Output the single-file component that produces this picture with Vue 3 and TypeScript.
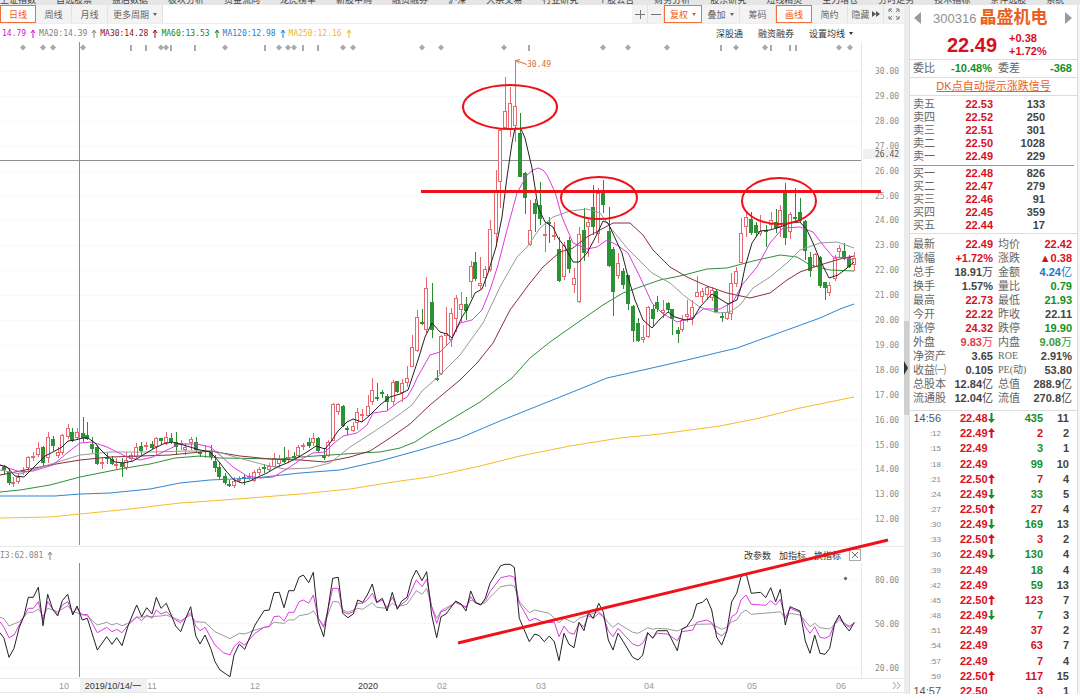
<script setup lang="ts">
type Candle = [x: number, high: number, top: number, bottom: number, low: number, up: 0 | 1]
type Tone = 'up' | 'down' | 'flat' | 'blue' | 'warm' | 'cool'

const marketTabs = ['上证指数', '自选股票', '盘后数据', '板块分析', '资金流向', '龙虎榜单', '新股申购', '融资融券', '沪深', '大宗交易', '行业研究', '个股公告', '财务分析', '股东研究', '短线精灵', '主力增仓', '分时走势', '技术指标', '条件选股', '系统']

const mas = [
  { text: '14.79', color: '#d414d4' },
  { text: 'MA20:14.39', color: '#808080' },
  { text: 'MA30:14.28', color: '#8a0f1c' },
  { text: 'MA60:13.53', color: '#128a12' },
  { text: 'MA120:12.98', color: '#1b7fd6' },
  { text: 'MA250:12.16', color: '#f5b521' },
]

const prices = Array.from({ length: 19 }, (_, i) => 30 - i)
const priceY = (p: number) => Math.round(71 + (30 - p) * 24.9)

const diamonds = [23, 43, 53, 83, 161, 166, 225, 279, 288, 294, 343, 353, 422, 441, 504, 603, 628, 667, 736, 765, 839, 850]
const bars = [131, 146, 171, 195, 265, 303, 318, 529, 721, 771, 790, 796]

const candles: Candle[] = [
  [4, 465, 467, 470, 475, 0], [9, 468, 472, 483, 485, 0], [13, 477, 482, 483, 487, 1], [18, 473, 477, 482, 484, 1],
  [23, 467, 470, 472, 475, 1], [28, 456, 457, 468, 471, 1], [33, 452, 456, 457, 461, 1], [38, 442, 448, 455, 457, 1],
  [43, 446, 447, 463, 467, 0], [48, 432, 437, 458, 463, 1], [53, 436, 439, 446, 451, 0], [58, 447, 452, 456, 458, 1],
  [62, 434, 435, 453, 455, 1], [68, 424, 428, 437, 439, 1], [72, 428, 432, 441, 442, 0], [77, 428, 432, 438, 440, 1],
  [83, 417, 433, 438, 442, 0], [87, 422, 435, 439, 440, 0], [92, 437, 444, 449, 453, 0], [97, 445, 447, 464, 465, 0],
  [102, 457, 462, 463, 469, 1], [107, 453, 457, 458, 464, 0], [112, 456, 459, 464, 465, 0], [116, 458, 464, 466, 469, 1],
  [122, 458, 463, 467, 477, 0], [126, 452, 460, 468, 470, 1], [131, 453, 455, 459, 461, 1], [136, 443, 447, 457, 458, 1],
  [141, 442, 446, 451, 455, 0], [146, 442, 445, 446, 450, 1], [152, 441, 444, 448, 449, 0], [156, 437, 438, 447, 455, 1],
  [161, 438, 438, 441, 445, 0], [166, 432, 437, 443, 445, 1], [171, 433, 438, 442, 444, 0], [176, 432, 442, 447, 455, 0],
  [181, 440, 443, 444, 450, 1], [185, 443, 447, 450, 455, 1], [191, 437, 439, 443, 450, 1], [196, 437, 442, 450, 452, 0],
  [200, 451, 452, 454, 457, 0], [205, 445, 450, 452, 458, 1], [211, 445, 451, 457, 460, 0], [215, 455, 461, 468, 472, 0],
  [219, 463, 467, 477, 480, 0], [225, 473, 476, 483, 485, 0], [229, 480, 484, 486, 487, 0], [234, 477, 481, 486, 488, 1],
  [239, 476, 479, 481, 483, 1], [244, 475, 477, 479, 485, 0], [249, 473, 476, 478, 480, 1], [254, 470, 472, 481, 482, 1],
  [259, 467, 469, 473, 475, 1], [264, 464, 467, 468, 473, 0], [269, 463, 466, 470, 471, 1], [274, 453, 458, 467, 467, 1],
  [279, 455, 459, 464, 467, 1], [284, 447, 459, 462, 463, 0], [288, 450, 457, 460, 463, 1], [294, 452, 456, 457, 459, 0],
  [298, 445, 447, 456, 457, 1], [303, 443, 445, 447, 450, 1], [309, 438, 442, 446, 448, 0], [313, 433, 438, 443, 446, 1],
  [318, 437, 438, 451, 452, 0], [324, 448, 456, 457, 460, 0], [328, 440, 442, 456, 457, 1], [333, 403, 404, 441, 441, 1],
  [338, 403, 404, 412, 415, 1], [343, 405, 406, 426, 427, 0], [347, 426, 428, 429, 435, 0], [353, 422, 426, 431, 432, 1],
  [357, 408, 412, 423, 430, 1], [362, 409, 414, 415, 422, 1], [368, 395, 406, 416, 417, 1], [372, 378, 390, 402, 405, 1],
  [377, 383, 397, 399, 401, 0], [382, 390, 392, 394, 398, 0], [387, 394, 396, 402, 410, 0], [393, 380, 382, 402, 405, 1],
  [397, 381, 381, 392, 393, 0], [402, 379, 383, 393, 402, 1], [407, 366, 378, 383, 387, 1], [412, 335, 347, 367, 367, 1],
  [417, 310, 317, 351, 352, 1], [422, 309, 322, 323, 325, 0], [426, 277, 288, 330, 333, 1], [432, 283, 302, 330, 338, 0],
  [437, 370, 378, 380, 381, 0], [441, 335, 336, 374, 375, 1], [446, 307, 333, 336, 345, 1], [451, 308, 313, 340, 347, 1],
  [456, 295, 298, 319, 332, 1], [461, 292, 304, 310, 323, 1], [466, 297, 304, 311, 320, 0], [471, 261, 266, 282, 298, 1],
  [475, 252, 262, 279, 281, 0], [480, 257, 283, 286, 289, 1], [485, 266, 269, 278, 287, 1], [490, 220, 229, 270, 272, 1],
  [496, 170, 192, 234, 247, 1], [500, 129, 130, 182, 208, 1], [505, 77, 111, 128, 129, 1], [510, 87, 103, 130, 137, 1],
  [515, 60, 106, 126, 142, 1], [520, 113, 133, 177, 177, 0], [525, 172, 173, 198, 214, 0], [530, 200, 230, 245, 246, 1],
  [535, 199, 203, 214, 232, 0], [540, 182, 205, 219, 225, 0], [545, 222, 234, 235, 252, 1], [549, 217, 222, 223, 243, 0],
  [554, 222, 235, 237, 240, 1], [559, 237, 249, 281, 282, 0], [564, 242, 245, 277, 280, 1], [569, 237, 240, 269, 273, 0],
  [574, 268, 278, 285, 293, 1], [579, 227, 234, 302, 303, 1], [584, 208, 230, 253, 261, 0], [588, 218, 222, 227, 257, 1],
  [593, 185, 207, 227, 235, 0], [598, 188, 193, 234, 243, 1], [603, 180, 192, 205, 213, 0], [609, 207, 231, 266, 267, 0],
  [613, 247, 249, 292, 316, 0], [618, 253, 263, 276, 279, 1], [623, 268, 271, 285, 289, 0], [628, 275, 275, 304, 310, 0],
  [633, 305, 306, 331, 342, 0], [638, 318, 323, 341, 342, 0], [643, 325, 337, 340, 343, 1], [648, 306, 307, 337, 338, 1],
  [653, 305, 309, 319, 327, 0], [657, 296, 302, 309, 312, 0], [663, 300, 310, 313, 318, 1], [668, 302, 303, 310, 312, 0],
  [672, 309, 309, 319, 335, 0], [678, 327, 330, 334, 343, 0], [682, 315, 320, 330, 332, 1], [687, 300, 314, 317, 322, 1],
  [692, 300, 307, 318, 325, 1], [697, 276, 292, 297, 297, 1], [702, 288, 291, 297, 303, 1], [707, 286, 287, 295, 300, 1],
  [712, 287, 290, 298, 301, 1], [716, 290, 291, 312, 312, 0], [722, 313, 316, 317, 322, 0], [727, 303, 312, 319, 320, 1],
  [731, 273, 283, 314, 320, 1], [736, 267, 271, 284, 287, 1], [741, 218, 233, 263, 263, 1], [746, 213, 217, 227, 237, 1],
  [751, 212, 219, 233, 235, 0], [756, 222, 225, 233, 237, 0], [760, 215, 231, 234, 236, 1], [766, 225, 230, 232, 247, 0],
  [771, 212, 220, 225, 229, 1], [776, 209, 222, 228, 233, 0], [780, 205, 210, 227, 237, 1], [785, 183, 192, 238, 245, 0],
  [790, 212, 214, 232, 239, 1], [795, 188, 217, 219, 222, 0], [800, 198, 212, 221, 223, 0], [805, 220, 221, 251, 260, 0],
  [810, 252, 257, 271, 277, 0], [815, 253, 254, 267, 267, 1], [820, 256, 257, 286, 288, 0], [825, 282, 282, 288, 300, 0],
  [829, 282, 285, 293, 296, 1], [835, 255, 258, 279, 281, 1], [839, 245, 248, 252, 257, 1], [844, 243, 251, 259, 260, 0],
  [849, 255, 257, 267, 268, 0], [854, 252, 258, 265, 271, 1],
]

const averages = [
  { name: 'ma250', points: '0,518 50,517 80,514 130,509 180,503 210,501 250,498 300,494 350,489 400,481 430,477 480,466 520,456 570,446 620,438 660,434 720,426 760,418 800,408 854,397' },
  { name: 'ma120', points: '0,496 55,496 80,494 110,493 150,489 180,483 210,480 255,478 300,473 340,470 380,461 420,450 460,438 500,421 540,405 570,393 607,378 643,370 687,360 737,348 787,330 820,318 840,309 854,304' },
  { name: 'ma60', points: '0,492 20,490 50,485 80,477 120,469 150,464 175,458 200,456 220,458 280,459 300,457 330,455 360,453 380,452 400,448 415,442 430,432 450,420 480,402 512,378 530,358 550,342 577,323 603,305 623,293 640,287 660,280 680,276 707,269 727,268 753,261 780,255 797,257 810,265 830,270 854,271' },
  { name: 'ma30', points: '0,475 20,471 50,465 80,460 110,457 140,456 170,455 210,451 240,456 270,459 300,460 325,462 350,457 370,451 390,438 410,424 430,405 460,380 477,363 493,343 510,310 530,283 543,267 560,252 573,248 587,237 600,230 613,223 630,223 643,235 653,250 670,267 687,277 707,286 727,293 750,298 770,293 787,280 800,272 820,265 840,259 854,256' },
  { name: 'ma20', points: '0,470 20,474 45,466 80,455 110,452 150,452 190,451 215,451 235,457 265,465 285,469 310,468 330,463 350,447 375,431 400,414 412,405 422,391 430,384 442,373 460,355 483,323 500,287 517,257 527,247 540,228 553,217 570,211 587,209 600,213 610,227 627,248 652,273 670,283 687,298 700,307 717,313 730,312 740,305 753,288 770,277 787,263 800,250 820,243 837,242 854,248' },
  { name: 'ma10', points: '0,465 20,472 33,471 53,465 67,453 80,443 92,442 107,447 127,457 140,460 153,457 167,450 180,444 197,444 210,447 220,455 233,467 247,476 260,478 273,477 287,469 300,460 313,453 325,452 333,444 343,436 357,433 367,425 373,413 387,411 397,403 407,397 413,387 417,378 430,355 440,352 450,342 460,323 472,320 482,310 490,290 498,265 507,230 517,193 527,175 533,170 538,168 543,170 547,175 555,192 562,217 573,243 587,249 597,247 607,240 617,245 628,253 640,277 652,303 662,313 677,322 692,318 703,309 720,309 733,302 742,285 757,267 770,243 783,228 800,227 813,232 823,245 833,257 847,258 854,260' },
  { name: 'ma5', points: '0,465 7,467 15,476 24,477 30,471 37,464 45,456 53,452 62,447 68,441 75,440 83,438 88,438 95,443 100,449 107,456 115,462 123,463 133,461 143,455 153,449 163,444 172,442 180,444 190,447 200,450 210,452 215,457 220,463 226,471 234,480 242,483 250,481 258,477 267,473 277,467 287,463 297,458 307,452 316,446 325,449 330,443 338,431 347,422 353,419 362,422 370,415 380,405 390,397 400,394 408,390 412,378 418,360 425,337 432,323 440,332 447,334 452,338 462,317 468,308 475,293 482,289 488,273 496,247 502,217 507,177 512,143 515,128 521,129 525,138 532,168 538,207 545,222 553,227 558,238 565,247 573,262 579,262 587,253 594,240 598,232 603,221 608,223 615,238 622,253 628,277 635,300 643,320 652,328 660,319 668,312 675,317 685,320 693,319 700,307 712,294 720,299 728,304 737,300 741,287 745,267 752,243 760,231 770,230 780,227 790,223 800,222 807,230 813,243 820,260 829,278 838,275 847,268 854,262' },
]

// Oscillator samples are kept in thirds of a chart unit, one block per stretch of the time axis.
type Block = { x: number; y: number; data: number[] }
const toPoints = (blocks: Block[]) =>
  blocks
    .flatMap((b) => {
      const out: string[] = []
      for (let i = 0; i < b.data.length; i += 2) {
        out.push(`${(b.x + b.data[i] / 3).toFixed(1)},${(b.y + b.data[i + 1] / 3).toFixed(1)}`)
      }
      return out
    })
    .join(' ')

const oscillators = [
  {
    name: 'rsi24',
    points: toPoints([
      { x: 0, y: 540, data: [0, 232, 12, 236, 27, 258, 58, 245, 85, 217, 100, 217, 115, 207, 129, 228, 143, 205, 173, 215, 203, 197, 218, 215, 247, 223, 262, 228, 292, 255, 320, 247, 336, 255, 350, 250, 366, 257, 385, 250, 410, 232, 440, 230, 483, 228, 499, 225, 542, 242, 572, 225, 587, 245, 615, 247, 645, 275, 690, 296, 718, 280, 734, 282, 765, 270, 808, 258, 822, 247, 852, 250, 866, 240, 882, 240, 897, 227, 926, 222, 940, 213, 955, 235, 971, 257, 998, 185, 1015, 185, 1028, 210, 1044, 217, 1073, 205] },
      { x: 360, y: 540, data: [8, 208, 37, 188, 50, 202, 81, 205, 97, 190, 112, 200, 141, 193, 169, 152, 186, 163, 200, 145, 215, 200, 230, 235, 243, 212, 287, 188, 318, 200, 332, 180, 362, 193, 376, 188, 390, 172, 422, 140, 450, 135, 463, 138, 478, 185, 508, 218, 524, 210, 568, 220, 597, 248, 612, 235, 642, 248, 657, 235, 685, 225, 716, 215, 730, 228, 745, 248, 759, 262, 774, 250, 818, 277, 834, 280] },
      { x: 640, y: 530, data: [0, 307, 23, 293, 38, 298, 52, 295, 82, 297, 112, 303, 140, 290, 170, 283, 215, 282, 245, 298, 260, 292, 275, 275, 290, 270, 303, 250, 318, 240, 334, 253, 392, 248, 421, 245, 436, 265, 450, 250, 480, 255, 510, 290, 524, 280, 540, 293, 569, 297, 584, 283, 598, 270, 628, 288, 643, 280] },
    ]),
  },
  {
    name: 'rsi12',
    points: toPoints([
      { x: 0, y: 540, data: [0, 245, 12, 262, 27, 293, 42, 285, 58, 255, 85, 205, 100, 205, 115, 185, 129, 240, 143, 185, 158, 208, 173, 222, 187, 195, 203, 185, 218, 220, 231, 205, 247, 225, 262, 223, 292, 278, 320, 262, 336, 275, 350, 268, 366, 278, 385, 255, 410, 230, 425, 242, 440, 225, 456, 235, 469, 210, 483, 222, 499, 215, 527, 240, 542, 248, 557, 232, 572, 218, 587, 258, 600, 272, 615, 262, 645, 315, 670, 338, 690, 345, 702, 320, 718, 305, 734, 315, 765, 280, 792, 262, 808, 260, 822, 230, 838, 228, 852, 243, 866, 217, 882, 217, 897, 185, 910, 180, 926, 190, 940, 165, 955, 235, 971, 262, 985, 205, 998, 145, 1015, 145, 1028, 215, 1044, 222, 1060, 215, 1073, 190] },
      { x: 360, y: 540, data: [8, 190, 22, 180, 37, 160, 50, 188, 67, 180, 81, 203, 97, 172, 112, 203, 141, 180, 169, 120, 186, 140, 200, 118, 215, 200, 230, 250, 243, 215, 258, 210, 287, 185, 318, 203, 332, 170, 347, 190, 362, 193, 376, 182, 390, 155, 422, 113, 450, 107, 463, 112, 478, 190, 493, 215, 508, 243, 524, 235, 553, 248, 583, 247, 597, 290, 612, 258, 627, 278, 642, 283, 657, 250, 672, 260, 685, 227, 700, 235, 716, 220, 730, 230, 745, 272, 759, 290, 774, 265, 818, 312, 834, 318] },
      { x: 640, y: 530, data: [0, 345, 10, 338, 23, 308, 38, 323, 52, 310, 82, 312, 112, 332, 126, 305, 158, 300, 170, 277, 200, 270, 215, 278, 230, 308, 245, 318, 260, 303, 275, 260, 290, 250, 303, 210, 318, 195, 334, 223, 377, 226, 392, 212, 407, 225, 421, 208, 436, 265, 450, 235, 480, 247, 496, 290, 510, 310, 524, 290, 540, 322, 555, 325, 569, 318, 584, 280, 598, 262, 613, 283, 628, 292, 643, 278] },
    ]),
  },
  {
    name: 'rsi6',
    points: toPoints([
      { x: 0, y: 540, data: [0, 278, 12, 295, 27, 352, 42, 325, 58, 262, 72, 228, 85, 172, 100, 172, 115, 142, 129, 257, 143, 163, 158, 208, 173, 228, 187, 182, 203, 163, 218, 225, 231, 198, 247, 240, 262, 235, 292, 330, 320, 290, 336, 313, 350, 293, 366, 317, 385, 255, 410, 195, 425, 230, 440, 203, 456, 222, 469, 172, 483, 205, 499, 190, 527, 258, 542, 275, 557, 235, 572, 200, 587, 287, 600, 312, 615, 285, 632, 325, 645, 365, 660, 390, 690, 410, 702, 345, 718, 312, 734, 328, 750, 290, 765, 255, 792, 212, 808, 210, 822, 158, 838, 157, 852, 203, 866, 152, 882, 152, 897, 112, 910, 105, 926, 128, 940, 97, 955, 245, 971, 290, 985, 200, 998, 115, 1015, 112, 1028, 220, 1044, 233, 1060, 222, 1073, 180] },
      { x: 360, y: 540, data: [8, 187, 22, 165, 37, 132, 50, 187, 67, 175, 81, 213, 97, 157, 112, 208, 125, 183, 141, 172, 155, 118, 169, 90, 186, 122, 200, 95, 215, 225, 230, 293, 243, 230, 258, 222, 287, 183, 303, 192, 318, 213, 332, 153, 347, 188, 362, 195, 376, 175, 390, 130, 422, 77, 435, 73, 450, 73, 463, 82, 478, 235, 493, 270, 508, 305, 524, 282, 538, 287, 553, 305, 568, 288, 583, 305, 597, 362, 612, 280, 627, 313, 642, 323, 657, 247, 672, 272, 685, 218, 700, 235, 716, 190, 730, 215, 745, 300, 759, 330, 774, 280, 790, 305, 818, 352, 834, 360] },
      { x: 640, y: 530, data: [8, 375, 23, 308, 38, 325, 52, 302, 82, 302, 112, 362, 126, 297, 140, 290, 158, 263, 170, 222, 187, 217, 200, 205, 215, 240, 230, 322, 245, 345, 260, 305, 275, 215, 290, 190, 303, 140, 318, 130, 334, 190, 362, 187, 377, 203, 392, 173, 407, 215, 421, 178, 436, 285, 450, 230, 480, 243, 496, 333, 510, 370, 524, 315, 540, 370, 555, 373, 569, 355, 584, 280, 598, 255, 613, 285, 628, 303, 643, 277] },
    ]),
  },
]

const months = [
  { x: 64, t: '10' }, { x: 152, t: '11' }, { x: 255, t: '12' }, { x: 442, t: '02' },
  { x: 541, t: '03' }, { x: 649, t: '04' }, { x: 752, t: '05' }, { x: 841, t: '06' },
]

const asks = [['卖五', '22.53', '133'], ['卖四', '22.52', '250'], ['卖三', '22.51', '301'], ['卖二', '22.50', '1028'], ['卖一', '22.49', '229']]
const bids = [['买一', '22.48', '826'], ['买二', '22.47', '279'], ['买三', '22.46', '91'], ['买四', '22.45', '359'], ['买五', '22.44', '17']]

type Cell = { k: string; v: string; u?: string; c: Tone }
const stats: [Cell, Cell][] = [
  [{ k: '最新', v: '22.49', c: 'up' }, { k: '均价', v: '22.42', c: 'up' }],
  [{ k: '涨幅', v: '+1.72%', c: 'up' }, { k: '涨跌', v: '▲0.38', c: 'up' }],
  [{ k: '总手', v: '18.91', u: '万', c: 'flat' }, { k: '金额', v: '4.24', u: '亿', c: 'blue' }],
  [{ k: '换手', v: '1.57%', c: 'flat' }, { k: '量比', v: '0.79', c: 'down' }],
  [{ k: '最高', v: '22.73', c: 'up' }, { k: '最低', v: '21.93', c: 'down' }],
  [{ k: '今开', v: '22.22', c: 'up' }, { k: '昨收', v: '22.11', c: 'flat' }],
  [{ k: '涨停', v: '24.32', c: 'up' }, { k: '跌停', v: '19.90', c: 'down' }],
  [{ k: '外盘', v: '9.83', u: '万', c: 'warm' }, { k: '内盘', v: '9.08', u: '万', c: 'cool' }],
  [{ k: '净资产', v: '3.65', c: 'flat' }, { k: 'ROE', v: '2.91%', c: 'flat' }],
  [{ k: '收益㈠', v: '0.105', c: 'flat' }, { k: 'PE(动)', v: '53.80', c: 'flat' }],
  [{ k: '总股本', v: '12.84', u: '亿', c: 'flat' }, { k: '总值', v: '288.9', u: '亿', c: 'flat' }],
  [{ k: '流通股', v: '12.04', u: '亿', c: 'flat' }, { k: '流值', v: '270.8', u: '亿', c: 'flat' }],
]

type Tick = { t: string; p: string; d: 'u' | 'd' | ''; v: number; c: 'up' | 'down'; n: number }
const ticks: Tick[] = [
  { t: '14:56', p: '22.48', d: 'd', v: 435, c: 'down', n: 11 },
  { t: ':12', p: '22.49', d: 'u', v: 2, c: 'up', n: 2 },
  { t: ':15', p: '22.49', d: '', v: 3, c: 'down', n: 1 },
  { t: ':18', p: '22.49', d: '', v: 99, c: 'down', n: 10 },
  { t: ':21', p: '22.50', d: 'u', v: 7, c: 'up', n: 4 },
  { t: ':24', p: '22.49', d: 'd', v: 33, c: 'down', n: 5 },
  { t: ':27', p: '22.50', d: 'u', v: 27, c: 'up', n: 4 },
  { t: ':30', p: '22.49', d: 'd', v: 169, c: 'down', n: 13 },
  { t: ':33', p: '22.50', d: 'u', v: 3, c: 'up', n: 2 },
  { t: ':36', p: '22.49', d: 'd', v: 130, c: 'down', n: 4 },
  { t: ':39', p: '22.49', d: '', v: 18, c: 'down', n: 4 },
  { t: ':42', p: '22.49', d: '', v: 59, c: 'down', n: 13 },
  { t: ':45', p: '22.50', d: 'u', v: 123, c: 'up', n: 7 },
  { t: ':48', p: '22.49', d: 'd', v: 7, c: 'down', n: 3 },
  { t: ':51', p: '22.49', d: '', v: 37, c: 'up', n: 2 },
  { t: ':54', p: '22.49', d: '', v: 63, c: 'up', n: 7 },
  { t: ':57', p: '22.49', d: '', v: 7, c: 'up', n: 4 },
  { t: ':59', p: '22.50', d: 'u', v: 117, c: 'up', n: 15 },
  { t: '14:57', p: '22.50', d: '', v: 3, c: 'up', n: 1 },
]
</script>

<template>
  <div class="app">
    <nav class="strip">
      <span v-for="m in marketTabs" :key="m">{{ m }}</span>
    </nav>
    <div class="body">
      <main class="chart">
        <div class="toolbar">
          <div class="periods">
            <button class="on">日线</button>
            <button>周线</button>
            <button>月线</button>
            <button class="more">更多周期<i class="caret"></i></button>
          </div>
          <div class="tools">
            <button class="tiny" aria-label="放大"><svg width="10" height="10"><path d="M0 5.5H10M5.5 1V10" /></svg></button>
            <button class="tiny" aria-label="缩小"><svg width="10" height="10"><path d="M0 5.5H10" /></svg></button>
            <button class="on wide">复权<i class="caret"></i></button>
            <button class="wide">叠加<i class="caret"></i></button>
            <button>筹码</button>
            <button class="on">画线</button>
            <button>简约</button>
            <button>隐藏<svg class="ff" width="8" height="6"><path d="M0 0L4 3L0 6ZM4 0L8 3L4 6Z" /></svg></button>
            <button class="full" aria-label="全屏"><svg width="12" height="12"><path d="M1 4V1H4M1 1L4 4M8 1H11V4M11 1L8 4M1 8V11H4M1 11L4 8M11 8V11H8M11 11L8 8" /></svg></button>
          </div>
        </div>

        <div class="legend">
          <div class="mas">
            <span v-for="m in mas" :key="m.text" class="ma" :style="{ color: m.color }">{{ m.text }}<svg width="6" height="9"><path d="M3 9V1M1 4L3 1L5 4" stroke="currentColor" fill="none" /></svg></span>
          </div>
          <div class="links">
            <button>深股通</button>
            <button>融资融券</button>
            <button>设置均线<i class="caret dark"></i></button>
          </div>
        </div>

        <div class="plots">
          <svg class="pane" viewBox="0 42 904 504">
            <g class="grid">
              <line v-for="p in prices" :key="p" x1="0" x2="861" :y1="priceY(p) + 0.5" :y2="priceY(p) + 0.5" />
            </g>
            <line class="frame" x1="861.5" x2="861.5" y1="42" y2="546" />
            <g class="marks">
              <path v-for="x in diamonds" :key="x" :d="`M${x - 3} 47.5L${x} 44.5L${x + 3} 47.5L${x} 50.5Z`" />
              <rect v-for="x in bars" :key="x" :x="x - 1" y="45" width="2" height="6" />
            </g>
            <g class="axis">
              <text v-for="p in prices" :key="p" x="875" :y="priceY(p) + 3">{{ p.toFixed(2) }}</text>
            </g>
            <g class="cross">
              <line x1="0" x2="861" y1="160.5" y2="160.5" />
              <line x1="79.5" x2="79.5" y1="42" y2="545" />
            </g>
            <rect class="tag" x="863" y="149" width="38" height="10" />
            <text class="tagtext" x="875" y="157">26.42</text>
            <g v-for="c in candles" :key="c[0]" :class="c[5] ? 'rise' : 'fall'">
              <path :d="`M${c[0] + 0.5} ${c[1]}V${c[2]}M${c[0] + 0.5} ${c[3]}V${c[4]}`" />
              <rect v-if="c[5]" :x="c[0] - 1.5" :y="c[2] + 0.5" width="3" :height="Math.max(c[3] - c[2] - 1, 1)" />
              <rect v-else :x="c[0] - 2" :y="c[2]" width="4" :height="Math.max(c[3] - c[2], 2)" />
            </g>
            <polyline v-for="a in averages" :key="a.name" :class="['line', a.name]" :points="a.points" />
            <g class="peak">
              <path d="M527 64.5L516 60.5M520 59.5L516 60.5L519 63.5" />
              <text x="527" y="67">30.49</text>
            </g>
          </svg>

          <div class="subhead">
            <span class="rsi">I3:62.081<svg width="6" height="9"><path d="M3 9V1M1 4L3 1L5 4" stroke="currentColor" fill="none" /></svg></span>
            <div class="subtools">
              <button>改参数</button>
              <button>加指标</button>
              <button>换指标</button>
              <button class="close" aria-label="关闭"><svg width="10" height="10"><path d="M2 2L8 8M8 2L2 8" /></svg></button>
            </div>
          </div>

          <svg class="pane" viewBox="0 563 904 131">
            <g class="grid">
              <line x1="0" x2="861" y1="579.5" y2="579.5" />
              <line x1="0" x2="861" y1="623.5" y2="623.5" />
              <line x1="0" x2="861" y1="668.5" y2="668.5" />
            </g>
            <line class="frame" x1="861.5" x2="861.5" y1="563" y2="678" />
            <line class="frame" x1="0" x2="904" y1="678.5" y2="678.5" />
            <line class="frame" x1="0" x2="904" y1="692.5" y2="692.5" />
            <g class="axis">
              <text x="875" y="583">80.00</text>
              <text x="875" y="627">50.00</text>
              <text x="875" y="671">20.00</text>
            </g>
            <g class="cross"><line x1="79.5" x2="79.5" y1="563" y2="677" /></g>
            <path class="dot" d="M843.5 578.5L845.5 576.5L847.5 578.5L845.5 580.5Z" />
            <polyline v-for="o in oscillators" :key="o.name" :class="['line', o.name]" :points="o.points" />
            <rect class="tag" x="80" y="679" width="67" height="13" />
            <g class="months">
              <text v-for="m in months" :key="m.t" :x="m.x" y="689">{{ m.t }}</text>
              <text class="year" x="368" y="689">2020</text>
              <text class="date" x="113" y="689">2019/10/14/一</text>
            </g>
            <path class="next" d="M893 682L896 685.5L893 689M897 682L900 685.5L897 689" />
          </svg>

          <svg class="drawings" viewBox="0 42 904 652" preserveAspectRatio="none">
            <path d="M421 191.5H881" />
            <ellipse cx="510" cy="107" rx="47" ry="22" />
            <ellipse cx="599" cy="198" rx="38" ry="21" />
            <ellipse cx="779" cy="201" rx="37" ry="23" />
            <path d="M458 643L888 540" />
          </svg>
        </div>
      </main>

      <div class="splitter"><button aria-label="收起侧栏"><svg width="4" height="14"><path d="M0 0L4 7L0 14Z" /></svg></button></div>

      <aside class="quote">
        <header class="name">
          <button aria-label="上一只"><svg width="7" height="12"><path d="M7 0V12L0 6Z" /></svg></button>
          <span class="code">300316</span>
          <h1>晶盛机电</h1>
          <button class="nextstock" aria-label="下一只"><svg width="7" height="12"><path d="M0 0V12L7 6Z" /></svg></button>
        </header>
        <div class="price">
          <strong>22.49</strong>
          <div class="chg"><span>+0.38</span><span>+1.72%</span></div>
        </div>
        <div class="ratio">
          <span class="k">委比</span><b class="down r">-10.48%</b><span class="k k2">委差</span><b class="down r2">-368</b>
        </div>
        <div class="signal"><a href="#signal">DK点自动提示涨跌信号</a></div>

        <div class="side asks">
          <table class="book">
            <tbody>
              <tr v-for="r in asks" :key="r[0]"><th>{{ r[0] }}</th><td class="up">{{ r[1] }}</td><td class="vol">{{ r[2] }}</td></tr>
            </tbody>
          </table>
        </div>
        <div class="side bids">
          <table class="book">
            <tbody>
              <tr v-for="r in bids" :key="r[0]"><th>{{ r[0] }}</th><td class="up">{{ r[1] }}</td><td class="vol">{{ r[2] }}</td></tr>
            </tbody>
          </table>
        </div>

        <div class="statbox">
          <table class="stats">
            <tbody>
              <tr v-for="(r, i) in stats" :key="i">
                <th>{{ r[0].k }}</th>
                <td class="first" :class="r[0].c">{{ r[0].v }}<span v-if="r[0].u">{{ r[0].u }}</span></td>
                <th class="second" :class="{ song: i === 8 || i === 9 }">{{ r[1].k }}</th>
                <td :class="r[1].c">{{ r[1].v }}<span v-if="r[1].u">{{ r[1].u }}</span></td>
              </tr>
            </tbody>
          </table>
        </div>

        <table class="ticks">
          <tbody>
            <tr v-for="t in ticks" :key="t.t">
              <td class="time" :class="{ sec: t.t.length < 4 }">{{ t.t }}</td>
              <td class="deal up">{{ t.p }}<svg v-if="t.d" :class="t.d" width="7" height="10"><path v-if="t.d === 'u'" d="M3.5 0L7 4H4.5V10H2.5V4H0Z" /><path v-else d="M3.5 10L7 6H4.5V0H2.5V6H0Z" /></svg></td>
              <td class="qty" :class="t.c">{{ t.v }}</td>
              <td class="cnt">{{ t.n }}</td>
            </tr>
          </tbody>
        </table>
      </aside>
      <div class="edge"></div>
    </div>
  </div>
</template>

<style>
html,
body {
  margin: 0;
  background: #fff;
}
</style>

<style scoped>
.app {
  display: flex;
  flex-direction: column;
  height: 100vh;
  overflow: hidden;
  background: #fff;
  color: #444;
  font-family: "Liberation Sans", "Noto Sans CJK SC", sans-serif;
  font-size: 11px;
}
button {
  margin: 0;
  padding: 0;
  border: 0;
  background: none;
  color: inherit;
  font: inherit;
  line-height: inherit;
}
svg {
  display: block;
}
.strip {
  display: flex;
  flex: none;
  align-items: flex-end;
  gap: 20px;
  height: 5px;
  overflow: hidden;
  background: #e6e6e6;
  color: #444;
  font-size: 9px;
  line-height: 9px;
  white-space: nowrap;
}
.body {
  display: flex;
  flex: 1;
  min-height: 0;
}
.chart {
  flex: 1;
  min-width: 0;
  overflow: hidden;
}
.toolbar {
  display: flex;
  justify-content: space-between;
  height: 18px;
  border-bottom: 1px solid #eee;
  color: #666;
  font-size: 9px;
}
.periods,
.tools {
  display: flex;
  height: 18px;
  background: #f3f3f3;
}
.toolbar button {
  display: flex;
  align-items: center;
  justify-content: center;
  gap: 4px;
  width: 36px;
  box-sizing: border-box;
  border-right: 1px solid #e2e2e2;
}
.toolbar button.on {
  border: 1px solid #f0703a;
  background: #fff;
  color: #ee5a1c;
}
.toolbar button.more {
  width: 55px;
}
.toolbar button.tiny {
  width: 16px;
}
.toolbar button.wide {
  width: 38px;
}
.toolbar button.full {
  width: 20px;
  border: 0;
}
.toolbar svg path {
  fill: none;
  stroke: #777;
}
.toolbar .ff path {
  fill: #555;
  stroke: none;
}
.toolbar button:has(.ff) {
  gap: 2px;
}
.caret {
  border: 2px solid transparent;
  border-top: 3px solid currentColor;
  border-bottom: 0;
}
.legend {
  display: flex;
  align-items: center;
  justify-content: space-between;
  height: 18px;
}
.mas {
  display: flex;
  gap: 3px;
  padding-left: 2px;
  font-family: "DejaVu Sans Mono", monospace;
  font-size: 8px;
}
.ma,
.rsi {
  display: flex;
  align-items: center;
  gap: 4px;
}
.links {
  display: flex;
  gap: 15px;
  margin-right: 51px;
  color: #333;
  font-size: 9px;
}
.links button {
  display: flex;
  align-items: center;
  gap: 4px;
}
.plots {
  position: relative;
}
.pane {
  width: 100%;
  height: auto;
}
.drawings {
  position: absolute;
  inset: 0;
  width: 100%;
  height: 100%;
  fill: none;
  stroke: #f01018;
  stroke-width: 2;
  pointer-events: none;
}
.drawings path {
  stroke-width: 3;
}
.grid line {
  stroke: #f3f3f3;
  stroke-dasharray: 2 2;
}
.frame {
  stroke: #e8e8e8;
}
.marks {
  fill: #aaa;
}
.axis,
.tagtext,
.peak text {
  fill: #8c8c8c;
  font-family: "DejaVu Sans Mono", monospace;
  font-size: 8px;
}
.tagtext {
  fill: #555;
}
.tag {
  fill: #f1f1f1;
}
.cross line {
  stroke: #8e8e8e;
}
.rise {
  fill: #fff;
  stroke: #e8666e;
}
.fall path {
  stroke: #2c8a35;
}
.fall rect {
  fill: #2c9235;
}
.line {
  fill: none;
  stroke-width: 1;
}
.ma5,
.rsi6 {
  stroke: #222;
}
.ma10,
.rsi12 {
  stroke: #dd3be0;
}
.ma20,
.rsi24 {
  stroke: #9a9a9a;
}
.ma30 {
  stroke: #8a2f3a;
}
.ma60 {
  stroke: #2f8f3a;
}
.ma120 {
  stroke: #2f86d2;
}
.ma250 {
  stroke: #f5bd2b;
}
.peak path {
  fill: none;
  stroke: #d8703a;
}
.peak text {
  fill: #d8703a;
}
.subhead {
  display: flex;
  align-items: center;
  justify-content: space-between;
  height: 17px;
  box-sizing: border-box;
  border-top: 1px solid #e8e8e8;
  font-size: 9px;
}
.rsi {
  color: #888;
  font-family: "DejaVu Sans Mono", monospace;
  font-size: 8px;
}
.subtools {
  display: flex;
  align-items: center;
  gap: 8px;
  margin-right: 43px;
  color: #333;
}
.close {
  border: 1px solid #aaa;
}
.close path {
  stroke: #777;
}
.dot {
  fill: #666;
}
.months {
  fill: #999;
  font-size: 9px;
  text-anchor: middle;
}
.months .year,
.months .date {
  fill: #333;
}
.next {
  fill: none;
  stroke: #999;
}
.splitter {
  display: flex;
  flex: none;
  flex-direction: column;
  align-items: stretch;
  width: 5px;
  box-sizing: border-box;
  padding-top: 316px;
  background: #ececec;
}
.splitter button {
  display: flex;
  align-items: center;
  height: 94px;
  background: #cfcfcf;
}
.splitter path {
  fill: #333;
}
.quote {
  display: flex;
  flex: none;
  flex-direction: column;
  width: 169px;
  box-sizing: border-box;
  border-right: 1px solid #ddd;
  border-left: 1px solid #ddd;
}
.edge {
  flex: none;
  width: 2px;
  background: #f6f6f6;
}
.up {
  color: #d80f1e;
}
.down {
  color: #149024;
}
.flat {
  color: #444;
}
.blue {
  color: #1478cc;
}
.warm {
  color: #e0404a;
}
.cool {
  color: #3a9c3a;
}
.name {
  display: flex;
  flex: none;
  align-items: center;
  height: 26px;
  padding: 0 5px 0 4px;
}
.name path {
  fill: #999;
}
.code {
  margin-left: 12px;
  color: #909090;
  font-size: 13px;
}
.name h1 {
  margin: 0 0 0 3px;
  color: #e8601c;
  font-size: 17px;
  line-height: 24px;
}
.nextstock {
  margin-left: auto;
}
.price {
  display: flex;
  flex: none;
  align-items: center;
  gap: 12px;
  height: 28px;
  padding-left: 37px;
  border-bottom: 1px solid #ddd;
  color: #d80f1e;
  font-weight: bold;
}
.price strong {
  font-size: 20px;
}
.chg {
  display: flex;
  flex-direction: column;
  line-height: 13px;
}
.ratio {
  display: grid;
  flex: none;
  grid-template-columns: 30px 49px 36px 44px;
  height: 17px;
  padding-left: 3px;
  border-bottom: 1px solid #ddd;
  line-height: 17px;
}
.k {
  color: #666;
}
.k2 {
  padding-left: 6px;
}
.r,
.r2 {
  text-align: right;
  white-space: nowrap;
}
.signal {
  flex: none;
  height: 17px;
  border-bottom: 1px solid #ddd;
  line-height: 17px;
  text-align: center;
}
.signal a {
  color: #e8601c;
}
table {
  flex: none;
  border-collapse: collapse;
  border-spacing: 0;
  table-layout: fixed;
}
th,
td {
  padding: 0;
  font-weight: bold;
  text-align: right;
  white-space: nowrap;
}
th {
  color: #666;
  font-weight: normal;
  text-align: left;
}
.side {
  flex: none;
  margin: 2px 3px 0;
}
.bids {
  padding-top: 1px;
  border-top: 1px solid #999;
}
.book {
  width: 100%;
}
.book tr {
  height: 13px;
  line-height: 13px;
}
.book th {
  width: 30px;
}
.book td {
  width: 50px;
}
.book .vol {
  width: auto;
  padding-right: 29px;
  color: #444;
}
.statbox {
  flex: none;
  margin-top: 1px;
  padding: 3px 3px 5px;
  border-top: 1px solid #ddd;
  border-bottom: 1px solid #ddd;
}
.stats {
  width: 159px;
}
.stats tr {
  height: 14px;
  line-height: 14px;
}
.stats th {
  width: 34px;
}
.stats td.first {
  width: 46px;
}
.stats th.second {
  width: 30px;
  padding-left: 5px;
}
.stats th.song {
  font-family: "Liberation Serif", "Noto Sans CJK SC", serif;
  font-size: 10px;
}
.stats td span {
  font-weight: normal;
}
.ticks {
  width: 159px;
  height: calc(100vh - 406px);
  margin: 0 3px;
}
.ticks td {
  line-height: 13px;
}
.ticks .time {
  width: 28px;
  color: #555;
  font-weight: normal;
}
.ticks .sec {
  color: #888;
  font-size: 8px;
}
.ticks .deal {
  width: 55px;
  padding-left: 19px;
  box-sizing: border-box;
  text-align: left;
}
.deal svg {
  display: inline-block;
  vertical-align: -1px;
}
.deal .u {
  fill: #d80f1e;
}
.deal .d {
  fill: #149024;
}
.ticks .qty {
  width: 47px;
}
.ticks .cnt {
  padding-right: 3px;
  color: #444;
}
</style>
